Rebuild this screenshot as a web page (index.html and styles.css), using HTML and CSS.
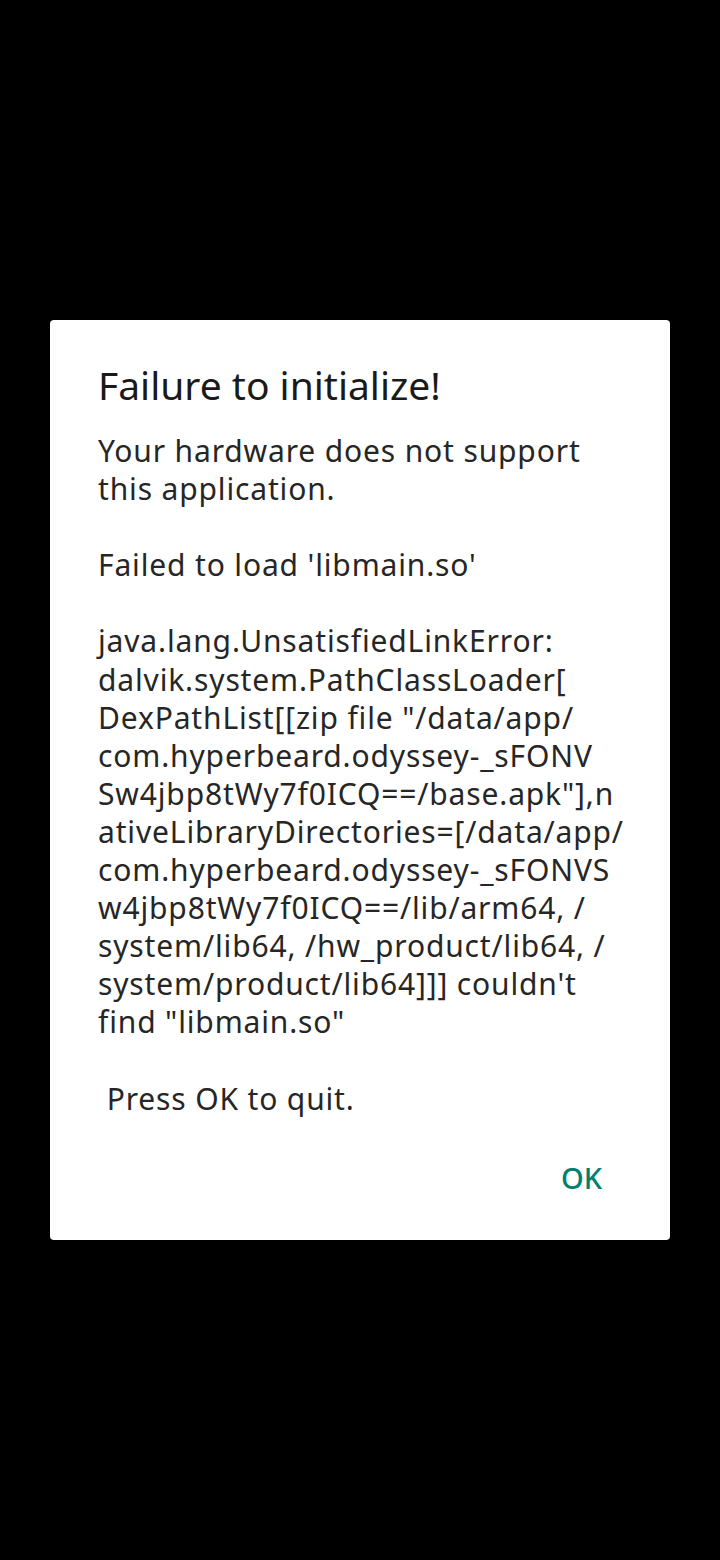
FILE: index.html
```html
<!DOCTYPE html>
<html>
<head>
<meta charset="utf-8">
<link rel="stylesheet" href="styles.css">
</head>
<body>
<div class="screen">
  <div class="dialog">
    <h1 class="title">Failure to initialize!</h1>
    <p class="message">Your hardware does not support
this application.

Failed to load 'libmain.so'

java.lang.UnsatisfiedLinkError:
dalvik.system.PathClassLoader[
DexPathList[[zip file "/data/app/
com.hyperbeard.odyssey-_sFONV
Sw4jbp8tWy7f0ICQ==/base.apk"],n
ativeLibraryDirectories=[/data/app/
com.hyperbeard.odyssey-_sFONVS
w4jbp8tWy7f0ICQ==/lib/arm64, /
system/lib64, /hw_product/lib64, /
system/product/lib64]]] couldn't
find "libmain.so"

 Press OK to quit.</p>
    <div class="actions">
      <button class="btn">OK</button>
    </div>
  </div>
</div>
</body>
</html>
```
FILE: styles.css
```css
html, body {
  margin: 0;
  padding: 0;
  background: #000;
}
.screen {
  width: 720px;
  height: 1560px;
  padding-top: 320px;
  box-sizing: border-box;
}
.dialog {
  margin-left: 50px;
  width: 620px;
  background: #fff;
  border-radius: 4px;
  padding: 41px 48px 38px 48px;
  box-sizing: border-box;
  font-family: "Noto Sans", "Open Sans", sans-serif;
  color: #1f1f1f;
}
.title {
  margin: 0;
  font-size: 39px;
  font-weight: 400;
  line-height: 48px;
  color: #1a1a1a;
}
.message {
  margin: 23px 0 0 0;
  font-size: 30px;
  letter-spacing: 0.85px;
  line-height: 38.1px;
  white-space: pre;
  color: #262626;
}
.actions {
  display: flex;
  justify-content: flex-end;
  margin-top: 36px;
  padding-right: 4px;
}
.btn {
  border: 0;
  background: none;
  padding: 0 16px;
  height: 48px;
  font-family: "Noto Sans", "Open Sans", sans-serif;
  font-size: 29px;
  font-weight: 500;
  color: #00806f;
}
```
